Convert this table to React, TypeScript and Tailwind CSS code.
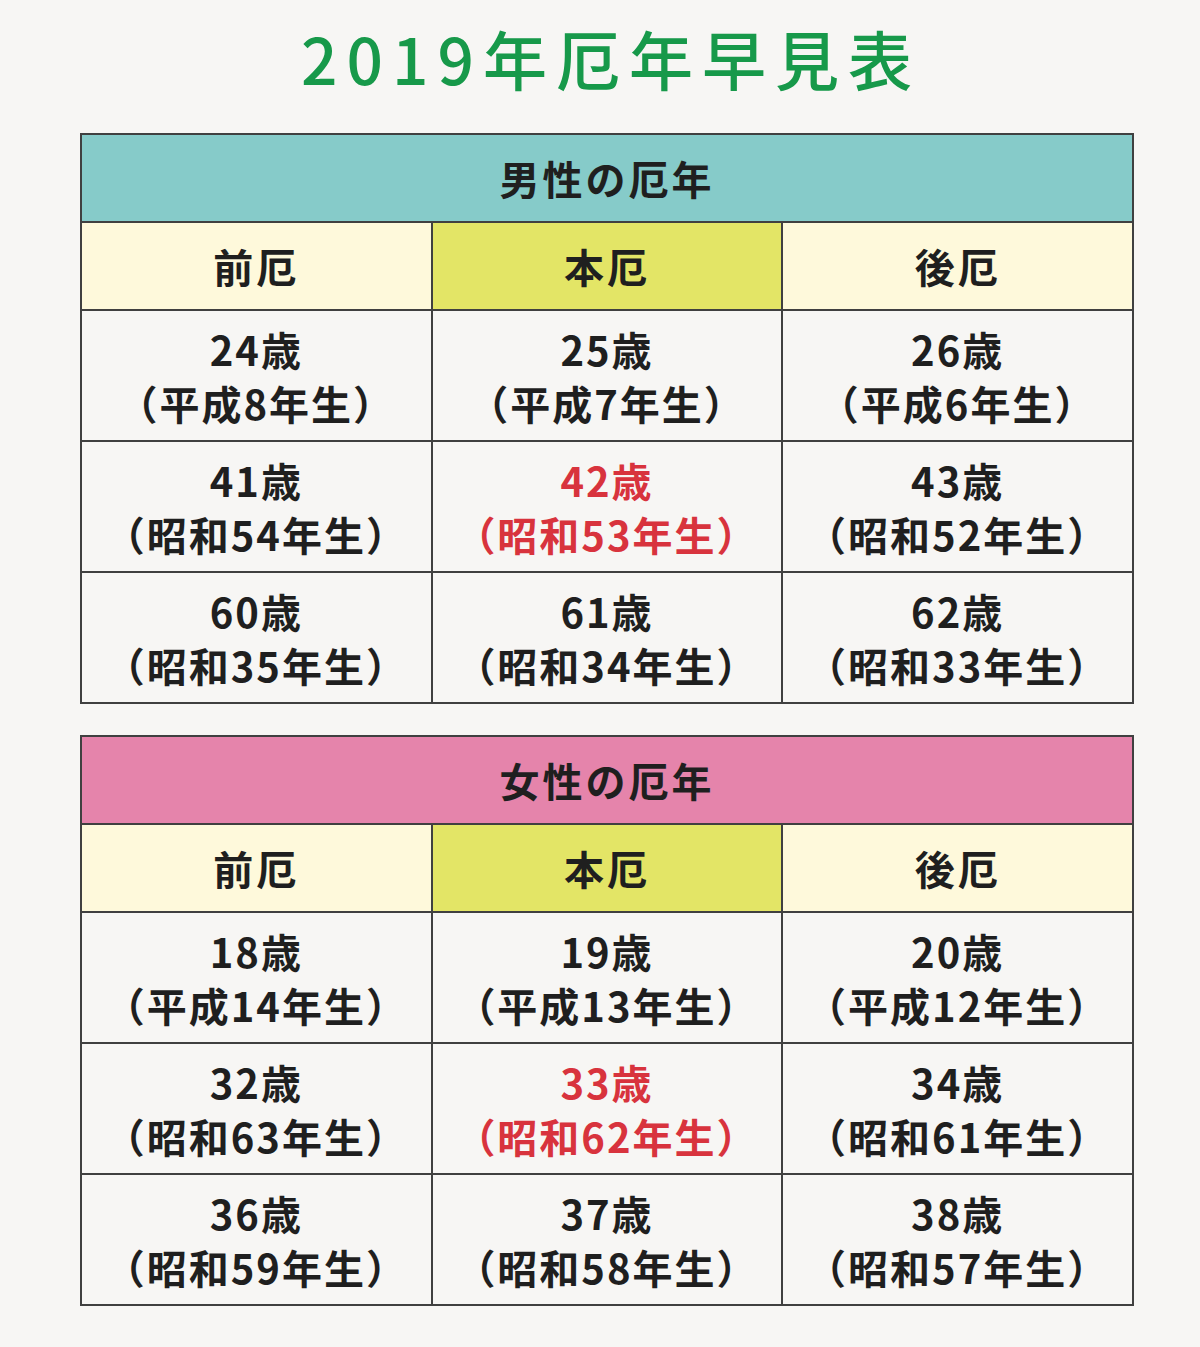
const FONT = { fontFamily: '"Noto Sans CJK JP", "Noto Sans", sans-serif' };

type Cell = { age: string; born: string };

const men: Cell[][] = [
  [
    { age: "24歳", born: "（平成8年生）" },
    { age: "25歳", born: "（平成7年生）" },
    { age: "26歳", born: "（平成6年生）" },
  ],
  [
    { age: "41歳", born: "（昭和54年生）" },
    { age: "42歳", born: "（昭和53年生）" },
    { age: "43歳", born: "（昭和52年生）" },
  ],
  [
    { age: "60歳", born: "（昭和35年生）" },
    { age: "61歳", born: "（昭和34年生）" },
    { age: "62歳", born: "（昭和33年生）" },
  ],
];

const women: Cell[][] = [
  [
    { age: "18歳", born: "（平成14年生）" },
    { age: "19歳", born: "（平成13年生）" },
    { age: "20歳", born: "（平成12年生）" },
  ],
  [
    { age: "32歳", born: "（昭和63年生）" },
    { age: "33歳", born: "（昭和62年生）" },
    { age: "34歳", born: "（昭和61年生）" },
  ],
  [
    { age: "36歳", born: "（昭和59年生）" },
    { age: "37歳", born: "（昭和58年生）" },
    { age: "38歳", born: "（昭和57年生）" },
  ],
];

function YakuTable({ title, headBg, rows }: { title: string; headBg: string; rows: Cell[][] }) {
  return (
    <table className="w-[1054px] table-fixed border-collapse border-2 border-[#404040] text-[#1f1f1f]">
      <thead>
        <tr>
          <th colSpan={3} className={`h-[88px] border-2 border-[#404040] text-[40px] font-bold tracking-[3px] ${headBg}`}>
            {title}
          </th>
        </tr>
        <tr>
          <th className="h-[88px] border-2 border-[#404040] bg-[#fef9db] text-[40px] font-bold tracking-[3px]">前厄</th>
          <th className="h-[88px] border-2 border-[#404040] bg-[#e3e566] text-[40px] font-bold tracking-[3px]">本厄</th>
          <th className="h-[88px] border-2 border-[#404040] bg-[#fef9db] text-[40px] font-bold tracking-[3px]">後厄</th>
        </tr>
      </thead>
      <tbody>
        {rows.map((row, i) => (
          <tr key={i}>
            {row.map((c, j) => (
              <td
                key={j}
                className={`h-[131px] border-2 border-[#404040] text-center text-[40px] font-bold leading-[54px] tracking-[2px] ${
                  i === 1 && j === 1 ? "text-[#d8333d]" : ""
                }`}
              >
                <div>{c.age}</div>
                <div>{c.born}</div>
              </td>
            ))}
          </tr>
        ))}
      </tbody>
    </table>
  );
}

export default function App() {
  return (
    <div className="flex min-h-[1347px] w-[1200px] flex-col items-center bg-[#f7f6f4]" style={FONT}>
      <h1 className="mt-[17px] h-[116px] pl-[22px] text-[64px] font-medium leading-[80px] tracking-[9px] text-[#17994a]">
        2019年厄年早見表
      </h1>
      <div className="ml-[14px] flex flex-col gap-[31px]">
        <YakuTable title="男性の厄年" headBg="bg-[#86cbc9]" rows={men} />
        <YakuTable title="女性の厄年" headBg="bg-[#e584ab]" rows={women} />
      </div>
    </div>
  );
}
